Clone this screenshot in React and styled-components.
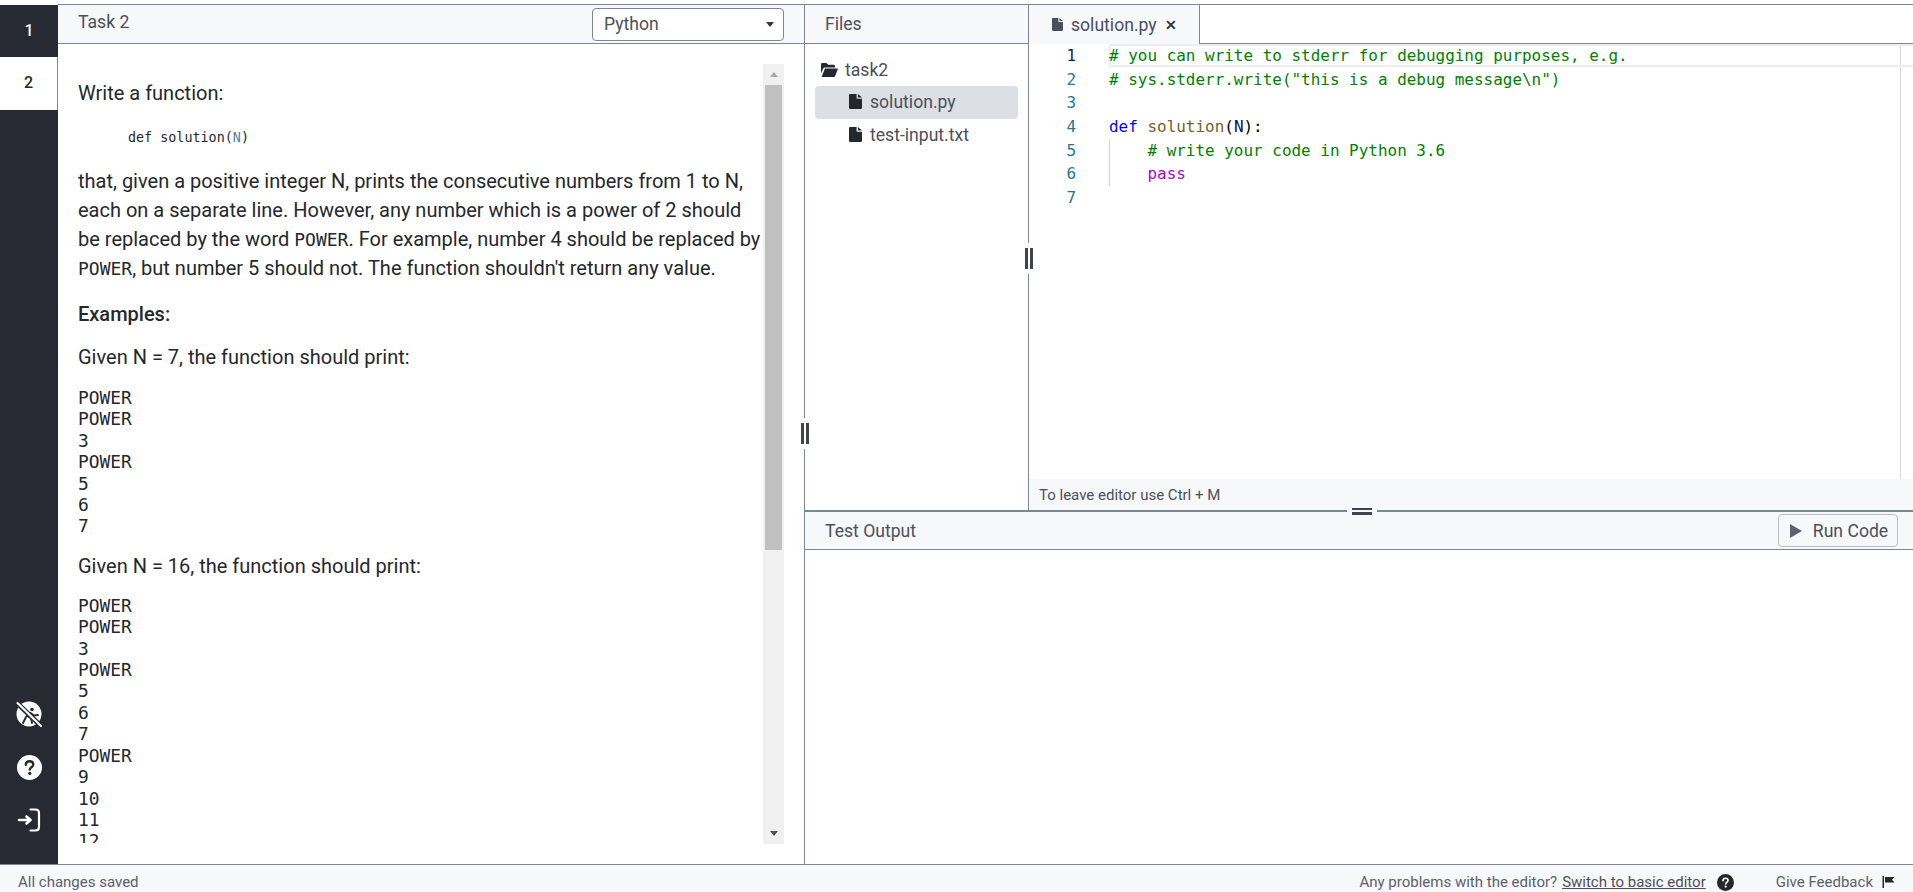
import React from "react";
import styled, { createGlobalStyle } from "styled-components";

const Global = createGlobalStyle`
  html, body { margin: 0; padding: 0; height: 100%; background: #fff; overflow: hidden; }
  #root { height: 100%; }
  * { box-sizing: border-box; }
`;

const LINE = "#7b8793";
const PANEL = "#f7f8fa";
const DARK = "#272a33";
const TEXT = "#4b4f5c";
const INK = "#25272e";
const MONO = `"DejaVu Sans Mono", "Liberation Mono", monospace`;
const SANS = `Roboto, "Liberation Sans", sans-serif`;

const Page = styled.div`
  height: 892px;
  display: flex;
  flex-direction: column;
  padding-top: 4px;
  font-family: ${SANS};
  color: ${INK};
`;
const Main = styled.div`
  flex: 1;
  min-height: 0;
  display: flex;
`;
const Sidebar = styled.nav`
  width: 58px;
  flex: none;
  background: ${DARK};
  display: flex;
  flex-direction: column;
  margin-top: 1px;
`;
const TaskTab = styled.div`
  height: ${(p) => (p.$active ? "53px" : "52px")};
  display: flex;
  align-items: center;
  justify-content: center;
  font-size: 16px;
  font-weight: 500;
  color: ${(p) => (p.$active ? INK : "#fff")};
  background: ${(p) => (p.$active ? "#fff" : DARK)};
  padding-bottom: 2px;
  border-right: ${(p) => (p.$active ? `1px solid ${LINE}` : "0")};
`;
const SideIcons = styled.div`
  margin-top: auto;
  padding-bottom: 30px;
  display: flex;
  flex-direction: column;
  align-items: center;
  gap: 25px;
`;
const IconSlot = styled.div`
  width: 28px;
  height: 28px;
  display: flex;
  align-items: center;
  justify-content: center;
`;
const Workspace = styled.div`
  flex: 1;
  min-width: 0;
  display: flex;
  border-top: 1px solid ${LINE};
`;
const TaskPane = styled.section`
  width: 747px;
  flex: none;
  display: flex;
  flex-direction: column;
  border-right: 1px solid ${LINE};
  position: relative;
`;
const Header = styled.header`
  height: 39px;
  flex: none;
  background: ${PANEL};
  border-bottom: 1px solid ${LINE};
  display: flex;
  align-items: center;
  justify-content: space-between;
  font-size: 17.6px;
  color: ${TEXT};
`;
const TaskHeader = styled(Header)`
  padding: 0 20px 0 20px;
`;
const TaskTitle = styled.span`
  margin-top: -4px;
`;
const LangSelect = styled.div`
  width: 192px;
  height: 33px;
  background: #fff;
  border: 1px solid ${LINE};
  border-radius: 4px;
  display: flex;
  align-items: center;
  justify-content: space-between;
  padding: 0 9px 0 11px;
  font-size: 17.6px;
`;
const Caret = styled.span`
  width: 0;
  height: 0;
  border-left: 4px solid transparent;
  border-right: 4px solid transparent;
  border-top: 5px solid #33363f;
`;
const ScrollWrap = styled.div`
  flex: 1;
  min-height: 0;
  padding: 20px 20px 20px 20px;
  display: flex;
`;
const Statement = styled.article`
  flex: 1;
  min-width: 0;
  overflow: hidden;
  font-size: 20px;
  line-height: 29px;
  padding-top: 15px;
  margin-bottom: 1px;
`;
const Para = styled.p`
  margin: 0 0 ${(p) => p.$gap ?? 14}px;
`;
const Strong = styled.p`
  margin: 0 0 14px;
  font-weight: 500;
`;
const FuncSig = styled.pre`
  margin: 0 0 14px 50px;
  font-family: ${MONO};
  font-size: 13.4px;
  line-height: 31px;
  color: ${INK};
`;
const Arg = styled.span`
  color: #4d7fa3;
`;
const InlineCode = styled.code`
  font-family: ${MONO};
  font-size: 18px;
`;
const Output = styled.pre`
  margin: 0 0 15px;
  font-family: ${MONO};
  font-size: 17.9px;
  line-height: 21.4px;
`;
const Scrollbar = styled.div`
  width: 21px;
  flex: none;
  background: #f0f0f0;
  display: flex;
  flex-direction: column;
  align-items: center;
`;
const ScrollBtn = styled.div`
  height: 21px;
  flex: none;
  display: flex;
  align-items: center;
  justify-content: center;
`;
const ScrollThumb = styled.div`
  width: 17px;
  height: 465px;
  flex: none;
  background: #c0c0c0;
`;
const ScrollSpacer = styled.div`
  flex: 1;
`;
const ArrowUp = styled.span`
  width: 0;
  height: 0;
  border-left: 4.5px solid transparent;
  border-right: 4.5px solid transparent;
  border-bottom: 5px solid #a8a8a8;
`;
const ArrowDown = styled.span`
  width: 0;
  height: 0;
  border-left: 4.5px solid transparent;
  border-right: 4.5px solid transparent;
  border-top: 5px solid #505050;
`;
const VGrip = styled.div`
  position: absolute;
  right: -5px;
  width: 9px;
  height: 31px;
  top: ${(p) => p.$top}px;
  background: #fff;
  display: flex;
  justify-content: center;
  align-items: center;
  gap: 2px;
  z-index: 2;
  &::before, &::after {
    content: "";
    width: 3px;
    height: 21px;
    background: #41444f;
  }
`;
const RightArea = styled.div`
  flex: 1;
  min-width: 0;
  display: flex;
  flex-direction: column;
`;
const TopRow = styled.div`
  height: 505px;
  flex: none;
  display: flex;
  position: relative;
`;
const FilesPane = styled.section`
  width: 224px;
  flex: none;
  display: flex;
  flex-direction: column;
  border-right: 1px solid ${LINE};
  position: relative;
`;
const FilesHeader = styled(Header)`
  padding: 0 20px;
  justify-content: flex-start;
`;
const FileList = styled.ul`
  list-style: none;
  margin: 0;
  padding: 9px 10px 0;
  font-size: 17.6px;
  color: ${TEXT};
`;
const FileRow = styled.li`
  height: 33px;
  display: flex;
  align-items: center;
  gap: ${(p) => (p.$folder ? "7px" : "8px")};
  padding-left: ${(p) => (p.$folder ? "6px" : "34px")};
  padding-bottom: ${(p) => (p.$folder ? "0" : "2px")};
  border-radius: 4px;
  background: ${(p) => (p.$selected ? "#dcdfe3" : "transparent")};
`;
const EditorPane = styled.section`
  flex: 1;
  min-width: 0;
  display: flex;
  flex-direction: column;
`;
const TabBar = styled.div`
  height: 39px;
  flex: none;
  border-bottom: 1px solid ${LINE};
  display: flex;
`;
const FileTab = styled.div`
  width: 171px;
  height: 39px;
  background: ${PANEL};
  border-right: 1px solid ${LINE};
  display: flex;
  align-items: center;
  padding-left: 23px;
  gap: 8px;
  font-size: 17.6px;
  color: ${TEXT};
`;
const CloseMark = styled.span`
  font-size: 14px;
  font-weight: 700;
  color: #33363f;
`;
const Code = styled.div`
  flex: 1;
  min-height: 0;
  position: relative;
  margin-right: 12px;
  border-right: 1px solid #d8d8d8;
`;
const ActiveLine = styled.div`
  position: absolute;
  left: 80px;
  right: -13px;
  top: 0;
  height: 23px;
  border: 2px solid #eeeeee;
  border-right: 0;
`;
const IndentGuide = styled.div`
  position: absolute;
  left: 80px;
  top: 95px;
  width: 1px;
  height: 47px;
  background: #d3d3d3;
`;
const CodeLine = styled.div`
  height: 23.6px;
  display: flex;
  align-items: center;
  font-family: ${MONO};
  font-size: 15.96px;
  position: relative;
`;
const LineNo = styled.span`
  width: 47px;
  flex: none;
  text-align: right;
  margin-right: 33px;
  color: ${(p) => (p.$active ? "#0b216f" : "#237893")};
`;
const CodeText = styled.span`
  white-space: pre;
`;
const Comment = styled.span`color: #008000;`;
const Keyword = styled.span`color: #0000ff;`;
const Fn = styled.span`color: #795e26;`;
const Param = styled.span`color: #001080;`;
const Plain = styled.span`color: #000;`;
const Control = styled.span`color: #af00db;`;
const LeaveHint = styled.div`
  height: 31px;
  flex: none;
  background: ${PANEL};
  display: flex;
  align-items: center;
  padding-left: 10px;
  font-size: 15px;
  color: ${TEXT};
`;
const HSplit = styled.div`
  height: 2px;
  flex: none;
  background: ${LINE};
  position: relative;
`;
const HGrip = styled.div`
  position: absolute;
  left: 542px;
  top: -6px;
  width: 30px;
  height: 14px;
  background: ${PANEL};
  display: flex;
  flex-direction: column;
  justify-content: center;
  align-items: center;
  gap: 2px;
  &::before, &::after {
    content: "";
    width: 20px;
    height: 2.5px;
    background: #41444f;
  }
`;
const OutputPane = styled.section`
  flex: 1;
  min-height: 0;
  display: flex;
  flex-direction: column;
`;
const OutputHeader = styled(Header)`
  height: 38px;
  padding: 0 15px 0 20px;
`;
const RunButton = styled.button`
  width: 120px;
  height: 33px;
  background: ${PANEL};
  border: 1px solid #b9bfc7;
  border-radius: 4px;
  display: flex;
  align-items: center;
  justify-content: center;
  gap: 11px;
  font-family: ${SANS};
  font-size: 17.6px;
  color: ${TEXT};
  padding: 0 0 0 2px;
`;
const PlayIcon = styled.span`
  width: 0;
  height: 0;
  border-top: 7.5px solid transparent;
  border-bottom: 7.5px solid transparent;
  border-left: 12px solid #5a6470;
`;
const StatusBar = styled.footer`
  height: 28px;
  flex: none;
  background: ${PANEL};
  border-top: 1px solid ${LINE};
  display: flex;
  align-items: center;
  padding: 7px 18px 0 18px;
  font-size: 15px;
  color: #5c606c;
`;
const Saved = styled.span`
  margin-right: auto;
`;
const Problems = styled.span`
  margin-right: 5px;
`;
const SwitchLink = styled.a`
  color: #4b4f5c;
  text-decoration: underline;
`;
const StatusIcon = styled.span`
  display: inline-flex;
  margin-left: ${(p) => p.$gap}px;
`;
const Feedback = styled.span`
  margin-left: 42px;
`;

const FileIcon = ({ width = 13, height = 15, color = "#25272e" }) => (
  <svg width={width} height={height} viewBox="0 0 12 16" preserveAspectRatio="none" aria-hidden>
    <path fill={color} d="M1.2 0H7v4.2c0 .5.3.8.8.8H12v9.6c0 .8-.6 1.4-1.4 1.4H1.4C.6 16 0 15.4 0 14.6V1.2C0 .5.5 0 1.2 0zM8.2 0 12 3.8H8.2z" />
  </svg>
);
const FolderOpen = () => (
  <svg width="17" height="14" viewBox="0 0 17 14" aria-hidden>
    <path fill="#25272e" d="M0 1.4C0 .6.6 0 1.4 0h4l1.8 1.8h5.4c.8 0 1.4.6 1.4 1.4v1.3H4.2c-1 0-1.7.5-2.1 1.3L0 10.6z" />
    <path fill="#25272e" d="M3.9 5.6H17l-2.8 7.4c-.2.6-.7 1-1.3 1H.6z" />
  </svg>
);
const BlindIcon = () => (
  <svg width="28" height="28" viewBox="0 0 28 28" aria-hidden>
    <circle cx="14" cy="14" r="12.5" fill="#fff" />
    <circle cx="17" cy="9.5" r="1.8" fill={DARK} />
    <path d="M15.5 13l3.5 2.5 4-.5M14 13l-2 3 4 2 1 5M11 17l-3 6" fill="none" stroke={DARK} strokeWidth="1.9" strokeLinecap="round" />
    <path d="M2 3l24 23" stroke={DARK} strokeWidth="5" />
    <path d="M2.5 3l23.5 23" stroke="#fff" strokeWidth="2.2" strokeLinecap="round" />
  </svg>
);
const HelpIcon = ({ size = 25, bg = "#fff", fg = DARK }) => (
  <svg width={size} height={size} viewBox="0 0 26 26" aria-hidden>
    <circle cx="13" cy="13" r="13" fill={bg} />
    <path d="M9.2 10.2c0-2.3 1.7-3.7 3.9-3.7 2.2 0 3.8 1.3 3.8 3.3 0 2.9-3.6 2.9-3.6 5.4" fill="none" stroke={fg} strokeWidth="2.5" strokeLinecap="round" />
    <circle cx="13.3" cy="19.2" r="1.7" fill={fg} />
  </svg>
);
const SignInIcon = () => (
  <svg width="24" height="24" viewBox="0 0 24 24" aria-hidden>
    <path d="M2 12h11.5M9.5 8.5 13.5 12l-4 3.5" fill="none" stroke="#fff" strokeWidth="2.6" strokeLinecap="round" strokeLinejoin="round" />
    <path d="M13.5 1.5h5c2 0 3.5 1.5 3.5 3.5v14c0 2-1.5 3.5-3.5 3.5h-5" fill="none" stroke="#fff" strokeWidth="2.2" strokeLinecap="round" />
  </svg>
);
const FlagIcon = () => (
  <svg width="13" height="12" viewBox="0 0 12 12" aria-hidden>
    <path fill="#25272e" d="M0 0h1.5v12H0zM2.5 1H12L9.5 3.7 12 6.5H2.5z" />
  </svg>
);

const Task2Outputs = ["POWER","POWER","3","POWER","5","6","7","POWER","9","10","11","12"];

export default function App() {
  return (
    <Page>
      <Global />
      <Main>
        <Sidebar>
          <TaskTab>1</TaskTab>
          <TaskTab $active>2</TaskTab>
          <SideIcons>
            <IconSlot><BlindIcon /></IconSlot>
            <IconSlot><HelpIcon /></IconSlot>
            <IconSlot><SignInIcon /></IconSlot>
          </SideIcons>
        </Sidebar>
        <Workspace>
          <TaskPane>
            <TaskHeader>
              <TaskTitle>Task 2</TaskTitle>
              <LangSelect>Python<Caret /></LangSelect>
            </TaskHeader>
            <ScrollWrap>
              <Statement>
                <Para>Write a function:</Para>
                <FuncSig>def solution(<Arg>N</Arg>)</FuncSig>
                <Para $gap={17}>
                  that, given a positive integer N, prints the consecutive numbers from 1 to N, each on a separate line. However, any number which is a power of 2 should be replaced by the word <InlineCode>POWER</InlineCode>. For example, number 4 should be replaced by <InlineCode>POWER</InlineCode>, but number 5 should not. The function shouldn't return any value.
                </Para>
                <Strong>Examples:</Strong>
                <Para $gap={15}>Given N = 7, the function should print:</Para>
                <Output>{"POWER\nPOWER\n3\nPOWER\n5\n6\n7"}</Output>
                <Para $gap={14}>Given N = 16, the function should print:</Para>
                <Output>{Task2Outputs.join("\n")}</Output>
              </Statement>
              <Scrollbar>
                <ScrollBtn><ArrowUp /></ScrollBtn>
                <ScrollThumb />
                <ScrollSpacer />
                <ScrollBtn><ArrowDown /></ScrollBtn>
              </Scrollbar>
            </ScrollWrap>
            <VGrip $top={413} />
          </TaskPane>
          <RightArea>
            <TopRow>
              <FilesPane>
                <FilesHeader>Files</FilesHeader>
                <FileList>
                  <FileRow $folder><FolderOpen />task2</FileRow>
                  <FileRow $selected><FileIcon />solution.py</FileRow>
                  <FileRow><FileIcon />test-input.txt</FileRow>
                </FileList>
                <VGrip $top={238} />
              </FilesPane>
              <EditorPane>
                <TabBar>
                  <FileTab><FileIcon width={11} height={13} color="#4b4f5c" />solution.py<CloseMark>✕</CloseMark></FileTab>
                </TabBar>
                <Code>
                  <ActiveLine />
                  <IndentGuide />
                  <CodeLine><LineNo $active>1</LineNo><CodeText><Comment># you can write to stderr for debugging purposes, e.g.</Comment></CodeText></CodeLine>
                  <CodeLine><LineNo>2</LineNo><CodeText><Comment># sys.stderr.write("this is a debug message\n")</Comment></CodeText></CodeLine>
                  <CodeLine><LineNo>3</LineNo></CodeLine>
                  <CodeLine><LineNo>4</LineNo><CodeText><Keyword>def</Keyword> <Fn>solution</Fn><Plain>(</Plain><Param>N</Param><Plain>):</Plain></CodeText></CodeLine>
                  <CodeLine><LineNo>5</LineNo><CodeText><Comment>    # write your code in Python 3.6</Comment></CodeText></CodeLine>
                  <CodeLine><LineNo>6</LineNo><CodeText><Control>    pass</Control></CodeText></CodeLine>
                  <CodeLine><LineNo>7</LineNo></CodeLine>
                </Code>
                <LeaveHint>To leave editor use Ctrl + M</LeaveHint>
              </EditorPane>
            </TopRow>
            <HSplit><HGrip /></HSplit>
            <OutputPane>
              <OutputHeader>Test Output<RunButton><PlayIcon />Run Code</RunButton></OutputHeader>
            </OutputPane>
          </RightArea>
        </Workspace>
      </Main>
      <StatusBar>
        <Saved>All changes saved</Saved>
        <Problems>Any problems with the editor?</Problems>
        <SwitchLink>Switch to basic editor</SwitchLink>
        <StatusIcon $gap={11}><HelpIcon size={17} bg="#25272e" fg="#fff" /></StatusIcon>
        <Feedback>Give Feedback</Feedback>
        <StatusIcon $gap={9}><FlagIcon /></StatusIcon>
      </StatusBar>
    </Page>
  );
}
